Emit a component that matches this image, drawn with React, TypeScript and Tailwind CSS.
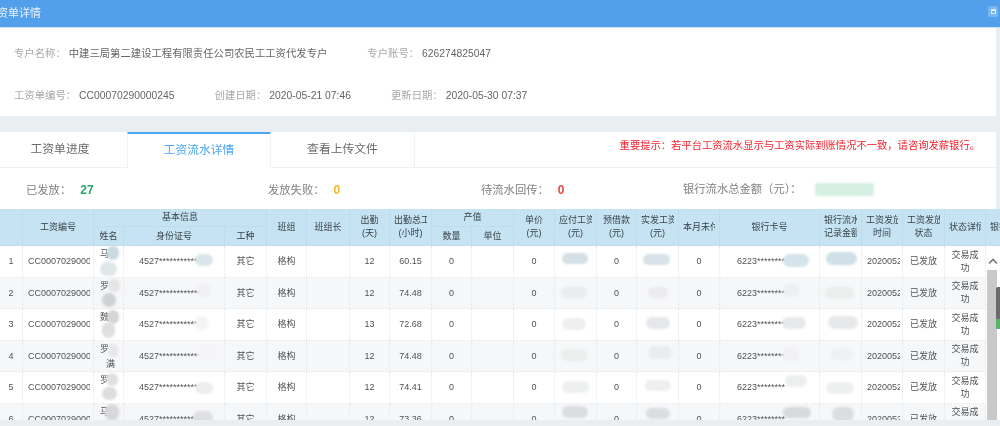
const FONT = "font-['Liberation_Sans','Noto_Sans_CJK_SC',sans-serif]";

const COLS =
  "grid-cols-[23px_71px_30px_101px_42px_40px_43px_40px_42px_40px_42px_41px_42px_40px_42px_41px_100px_42px_41px_42px_41px_41px]";

const headCell =
  "bg-[#c6e3f4] border-r border-b border-[#bedcee] text-[9px] leading-[13px] text-[#3a4449] flex items-center justify-center text-center px-[4px]";
const bodyCell =
  "relative pt-px border-r border-b border-dotted border-[#e4e7e9] text-[9px] leading-[13px] text-[#505356] flex items-center justify-center text-center";

function Head({ lines, span = "" }: { lines: string[]; span?: string }) {
  return (
    <div className={`${headCell} ${span}`}>
      <span className="block w-full overflow-hidden whitespace-nowrap">
        {lines.map((l) => (
          <span key={l} className="block overflow-hidden">
            {l}
          </span>
        ))}
      </span>
    </div>
  );
}

function Blob({ c }: { c: string }) {
  return <span className={`absolute rounded-full blur-[1px] ${c}`} />;
}

type Row = {
  n: number;
  name: string;
  second?: string;
  nameBlobs: string[];
  idMask: string;
  id: string;
  days: number;
  hours: string;
  pay: string;
  real: string;
  cardMask: string;
  flow: string;
};

const rows: Row[] = [
  {
    n: 1,
    name: "马",
    nameBlobs: [
      "left-[13px] top-[0px] w-[12px] h-[14px] bg-[#c9d9e0]",
      "left-[6px] top-[16px] w-[17px] h-[14px] bg-[#dfe6e8]",
    ],
    id: "4527************",
    idMask: "left-[71px] top-[8px] w-[18px] h-[12px] bg-[#d8e5ea]",
    days: 12,
    hours: "60.15",
    pay: "left-[7px] top-[7px] w-[26px] h-[11px] bg-[#d4e0e5]",
    real: "left-[6px] top-[8px] w-[27px] h-[11px] bg-[#d8e2e8]",
    cardMask: "left-[63px] top-[8px] w-[26px] h-[13px] bg-[#d5e3ea]",
    flow: "left-[6px] top-[6px] w-[31px] h-[13px] bg-[#cfe0e8]",
  },
  {
    n: 2,
    name: "罗",
    nameBlobs: [
      "left-[14px] top-[1px] w-[12px] h-[13px] bg-[#e5e5e5]",
      "left-[8px] top-[15px] w-[14px] h-[14px] bg-[#cfd0d2]",
    ],
    id: "4527************",
    idMask: "left-[73px] top-[6px] w-[14px] h-[13px] bg-[#f0f0f2]",
    days: 12,
    hours: "74.48",
    pay: "left-[6px] top-[9px] w-[26px] h-[11px] bg-[#ebecee]",
    real: "left-[11px] top-[9px] w-[20px] h-[11px] bg-[#ececee]",
    cardMask: "left-[63px] top-[6px] w-[17px] h-[13px] bg-[#eeeff0]",
    flow: "left-[5px] top-[9px] w-[29px] h-[12px] bg-[#eceded]",
  },
  {
    n: 3,
    name: "魏",
    nameBlobs: [
      "left-[13px] top-[1px] w-[12px] h-[14px] bg-[#d5d5d7]",
      "left-[8px] top-[13px] w-[13px] h-[16px] bg-[#dedfe0]",
    ],
    id: "4527***********",
    idMask: "left-[71px] top-[7px] w-[14px] h-[14px] bg-[#f4f4f5]",
    days: 13,
    hours: "72.68",
    pay: "left-[7px] top-[9px] w-[24px] h-[12px] bg-[#eeeff0]",
    real: "left-[9px] top-[8px] w-[24px] h-[12px] bg-[#e6e7ea]",
    cardMask: "left-[62px] top-[8px] w-[24px] h-[12px] bg-[#e8e9eb]",
    flow: "left-[8px] top-[7px] w-[30px] h-[13px] bg-[#e6e8ea]",
  },
  {
    n: 4,
    name: "罗",
    second: "满",
    nameBlobs: ["left-[14px] top-[3px] w-[10px] h-[13px] bg-[#e8e8ea]"],
    id: "4527************",
    idMask: "left-[73px] top-[5px] w-[20px] h-[15px] bg-[#f5f5f7]",
    days: 12,
    hours: "74.48",
    pay: "left-[6px] top-[8px] w-[26px] h-[12px] bg-[#eceded]",
    real: "left-[11px] top-[5px] w-[24px] h-[13px] bg-[#ebecef]",
    cardMask: "left-[62px] top-[6px] w-[18px] h-[14px] bg-[#f2f2f4]",
    flow: "left-[11px] top-[8px] w-[22px] h-[11px] bg-[#eff0f1]",
  },
  {
    n: 5,
    name: "罗",
    nameBlobs: [
      "left-[12px] top-[1px] w-[12px] h-[13px] bg-[#dfe0e2]",
      "left-[8px] top-[15px] w-[15px] h-[13px] bg-[#dcdddf]",
    ],
    id: "4527************",
    idMask: "left-[71px] top-[10px] w-[18px] h-[12px] bg-[#ecedee]",
    days: 12,
    hours: "74.41",
    pay: "left-[7px] top-[9px] w-[27px] h-[12px] bg-[#eeeff0]",
    real: "left-[8px] top-[8px] w-[26px] h-[11px] bg-[#eeeff0]",
    cardMask: "left-[65px] top-[3px] w-[22px] h-[12px] bg-[#eeeff0]",
    flow: "left-[6px] top-[10px] w-[28px] h-[12px] bg-[#eef0f0]",
  },
  {
    n: 6,
    name: "马",
    nameBlobs: ["left-[11px] top-[0px] w-[14px] h-[17px] bg-[#d8d8da]"],
    id: "4527************",
    idMask: "left-[69px] top-[7px] w-[20px] h-[13px] bg-[#e0e0e2]",
    days: 12,
    hours: "73.36",
    pay: "left-[7px] top-[2px] w-[26px] h-[12px] bg-[#dcdde0]",
    real: "left-[9px] top-[4px] w-[24px] h-[11px] bg-[#dcdde0]",
    cardMask: "left-[63px] top-[3px] w-[28px] h-[11px] bg-[#d8d9db]",
    flow: "left-[12px] top-[3px] w-[22px] h-[14px] bg-[#dcdde0]",
  },
];

function TableRow({ r }: { r: Row }) {
  const bg = r.n % 2 === 0 ? "bg-[#f6f7f9]" : "bg-white";
  const cell = `${bodyCell} ${bg}`;
  return (
    <>
      <div className={cell}>{r.n}</div>
      <div className={`${cell} !justify-start pl-[5px] pr-[3px]`}>
        <span className="block overflow-hidden whitespace-nowrap">CC00070290000245</span>
      </div>
      <div className={`${cell} !items-start !justify-start`}>
        <span className="block pl-[6px] pt-[1px] w-full text-left">
          {r.name}
          {r.second && <span className="block pl-[6px] pt-[2px]">{r.second}</span>}
        </span>
        {r.nameBlobs.map((b) => (
          <Blob key={b} c={b} />
        ))}
      </div>
      <div className={`${cell} !justify-start pl-[15px]`}>
        {r.id}
        <Blob c={r.idMask} />
      </div>
      <div className={cell}>其它</div>
      <div className={cell}>格构</div>
      <div className={cell} />
      <div className={cell}>{r.days}</div>
      <div className={cell}>{r.hours}</div>
      <div className={cell}>0</div>
      <div className={cell} />
      <div className={cell}>0</div>
      <div className={cell}>
        <Blob c={r.pay} />
      </div>
      <div className={cell}>0</div>
      <div className={cell}>
        <Blob c={r.real} />
      </div>
      <div className={cell}>0</div>
      <div className={`${cell} !justify-start pl-[17px]`}>
        6223********
        <Blob c={r.cardMask} />
      </div>
      <div className={cell}>
        <Blob c={r.flow} />
      </div>
      <div className={`${cell} !justify-start pl-[5px] pr-[2px]`}>
        <span className="block overflow-hidden whitespace-nowrap">20200525</span>
      </div>
      <div className={cell}>已发放</div>
      <div className={`${cell} px-[5px]`}>交易成功</div>
      <div className={cell} />
    </>
  );
}

function Label({ children }: { children: string }) {
  return <span className="text-[#a8a8a8] mr-[3px]">{children}</span>;
}

export default function App() {
  return (
    <div className={`relative w-[1000px] h-[426px] overflow-hidden bg-[#ebeef1] blur-[0.35px] ${FONT}`}>
      <div className="h-[28px] bg-[#52a0ec] border-b border-[#cfe0f5] flex items-center justify-between overflow-hidden">
        <span className="-ml-[14px] text-[11px] text-[#eaf4fd] whitespace-nowrap">工资单详情</span>
        <span className="mr-[2px] mb-[4px] w-[10px] h-[11px] rounded-[2px] bg-[#7ab6f0] flex items-center justify-center">
          <span className="block w-[5px] h-[5px] border border-[#dcebfa] border-t-2" />
        </span>
      </div>

      <div className="w-[996px] h-[88px] bg-white pl-[14px] text-[10.35px] text-[#666666] flex flex-col">
        <div className="h-[50px] pt-[19px] flex gap-[40px] leading-[13px]">
          <span>
            <Label>专户名称：</Label>中建三局第二建设工程有限责任公司农民工工资代发专户
          </span>
          <span>
            <Label>专户账号：</Label>626274825047
          </span>
        </div>
        <div className="pt-[11px] flex gap-[40px] leading-[13px]">
          <span>
            <Label>工资单编号：</Label>CC00070290000245
          </span>
          <span>
            <Label>创建日期：</Label>2020-05-21 07:46
          </span>
          <span>
            <Label>更新日期：</Label>2020-05-30 07:37
          </span>
        </div>
      </div>

      <div className="mt-[16px] w-[996px] bg-white">
        <div className="h-[36px] flex border-b border-[#f0f1f3]">
          <div className="w-[127px] pr-[7px] flex items-center justify-center text-[11.8px] text-[#6a6a6a]">工资单进度</div>
          <div className="w-[144px] h-[36px] bg-white border-t-2 border-[#4ba7f5] border-x border-x-[#f0f1f3] flex items-center justify-center text-[11.8px] text-[#4ba7f5]">
            工资流水详情
          </div>
          <div className="w-[144px] border-r border-[#f0f1f3] flex items-center justify-center text-[11.8px] text-[#6a6a6a]">
            查看上传文件
          </div>
          <div className="flex-1 flex items-center justify-end pr-[16px] pb-[8px] text-[10.3px] text-[#f5222d] whitespace-nowrap">
            重要提示：若平台工资流水显示与工资实际到账情况不一致，请咨询发薪银行。
          </div>
        </div>
        <div className="h-[41px] pl-[26px] pt-[2px] grid grid-cols-[242px_213px_202px_1fr] items-center text-[11.3px] text-[#808080]">
          <div>
            已发放：<span className="ml-[9px] text-[12px] font-bold text-[#27a86a]">27</span>
          </div>
          <div>
            发放失败：<span className="ml-[9px] text-[12px] font-bold text-[#fab52a]">0</span>
          </div>
          <div>
            待流水回传：<span className="ml-[9px] text-[12px] font-bold text-[#e9483f]">0</span>
          </div>
          <div className="flex items-center">
            银行流水总金额（元）：
            <span className="ml-[13px] w-[59px] h-[13px] rounded-[3px] bg-[#d6efe3] blur-[1px]" />
          </div>
        </div>
      </div>

      <div className="h-[211px] overflow-hidden">
        <div className={`grid ${COLS} grid-rows-[18px_19px] auto-rows-[31.5px] w-[1035px]`}>
          <Head lines={[""]} span="row-span-2" />
          <Head lines={["工资编号"]} span="row-span-2" />
          <Head lines={["基本信息"]} span="col-span-3" />
          <Head lines={["班组"]} span="row-span-2" />
          <Head lines={["班组长"]} span="row-span-2" />
          <Head lines={["出勤", "(天)"]} span="row-span-2" />
          <Head lines={["出勤总工", "(小时)"]} span="row-span-2" />
          <Head lines={["产值"]} span="col-span-2" />
          <Head lines={["单价", "(元)"]} span="row-span-2" />
          <Head lines={["应付工资", "(元)"]} span="row-span-2" />
          <Head lines={["预借款", "(元)"]} span="row-span-2" />
          <Head lines={["实发工资", "(元)"]} span="row-span-2" />
          <Head lines={["本月未付"]} span="row-span-2" />
          <Head lines={["银行卡号"]} span="row-span-2" />
          <Head lines={["银行流水", "记录金额"]} span="row-span-2" />
          <Head lines={["工资发放", "时间"]} span="row-span-2" />
          <Head lines={["工资发放", "状态"]} span="row-span-2" />
          <Head lines={["状态详情"]} span="row-span-2" />
          <Head lines={["银行流水"]} span="row-span-2" />
          <Head lines={["姓名"]} />
          <Head lines={["身份证号"]} />
          <Head lines={["工种"]} />
          <Head lines={["数量"]} />
          <Head lines={["单位"]} />
          {rows.map((r) => (
            <TableRow key={r.n} r={r} />
          ))}
        </div>
      </div>

      <div className="absolute right-0 top-[246px] bottom-[6px] w-[14px] bg-white flex flex-col items-start">
        <svg className="mt-[12px] ml-[2px]" width="10" height="7" viewBox="0 0 10 7" fill="none">
          <path d="M1 5.5 L5 1.5 L9 5.5" stroke="#777" strokeWidth="1.6" />
        </svg>
        <div className="mt-[5px] ml-px w-[10px] flex-1 bg-[#c9c9c9]" />
        <div className="absolute right-0 top-[41px] w-[4px] h-[42px] rounded-l-[2px] bg-[#6a6a6a] overflow-hidden flex flex-col justify-end">
          <div className="h-[10px] bg-[#57b368]" />
        </div>
      </div>
    </div>
  );
}
